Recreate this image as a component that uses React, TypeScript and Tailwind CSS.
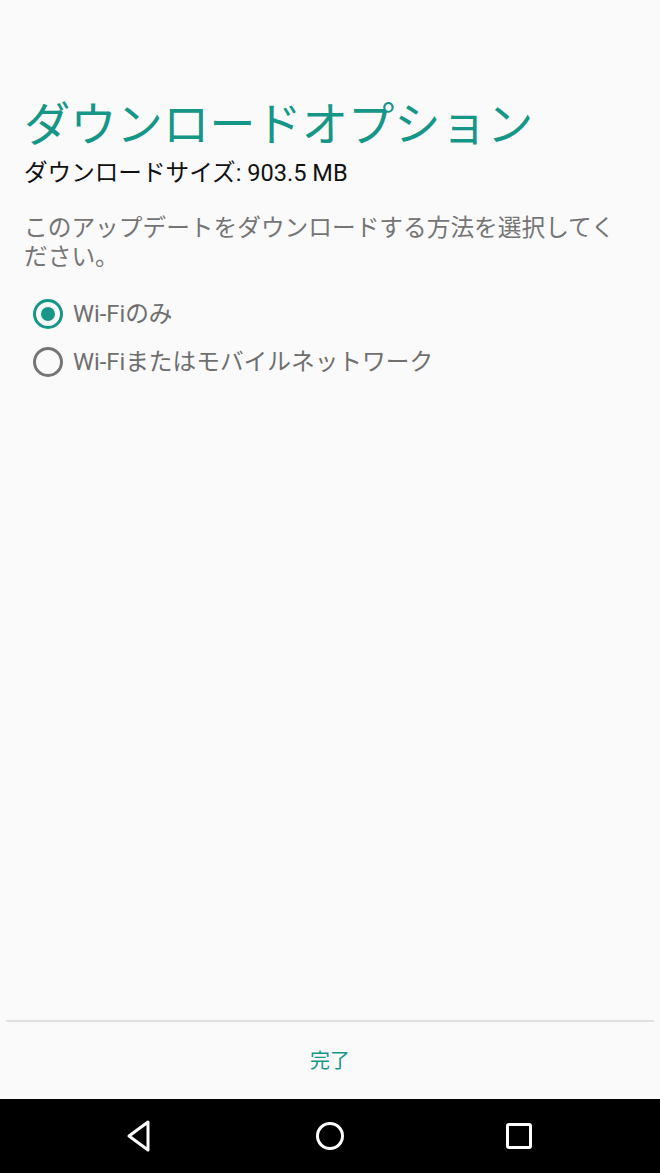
import React from 'react';

const FONT = { fontFamily: 'Roboto, "Noto Sans CJK JP", sans-serif' };

const Radio: React.FC<{ checked?: boolean; label: string }> = ({ checked, label }) => (
  <div className="flex h-[48px] items-center">
    <div className="flex w-[50px] shrink-0 items-center justify-center pl-[1px]">
      <span
        className={`flex h-[30px] w-[30px] items-center justify-center rounded-full border-[3px] ${
          checked ? 'border-[#159687]' : 'border-[#757575]'
        }`}
      >
        {checked && <span className="h-[14px] w-[14px] rounded-full bg-[#159687]" />}
      </span>
    </div>
    <span className="pl-[1px] text-[23.7px] leading-[28px] text-[#6f6f6f]">{label}</span>
  </div>
);

export default function App() {
  return (
    <div className="flex h-[1173px] w-[660px] flex-col bg-[#fafafa]" style={FONT}>
      <main className="flex-1 px-[24px] pt-[97px]">
        <h1 className="text-[46.3px] leading-[56px] text-[#159687]">ダウンロードオプション</h1>
        <p className="mt-[6px] text-[23.6px] leading-[28px] text-[#111]">
          ダウンロードサイズ: 903.5 MB
        </p>
        <p className="mt-[27px] pr-[10px] text-[23.7px] leading-[29px] text-[#757575]">
          このアップデートをダウンロードする方法を選択してください。
        </p>
        <div className="mt-[18px] -ml-[2px] flex flex-col">
          <Radio checked label="Wi-Fiのみ" />
          <Radio label="Wi-Fiまたはモバイルネットワーク" />
        </div>
      </main>

      <div className="mx-[6px] h-[2px] bg-[#e0e0e0]" />
      <div className="flex h-[77px] items-center justify-center">
        <span className="text-[20px] text-[#159687]">完了</span>
      </div>

      <nav className="flex h-[74px] items-center justify-around bg-black px-[46px]">
        <svg width="40" height="40" viewBox="0 0 40 40">
          <path d="M27 6 L8 20 L27 34 Z" fill="none" stroke="white" strokeWidth="3" strokeLinejoin="round" />
        </svg>
        <svg width="40" height="40" viewBox="0 0 40 40">
          <circle cx="20" cy="20" r="12.5" fill="none" stroke="white" strokeWidth="3" />
        </svg>
        <svg width="40" height="40" viewBox="0 0 40 40">
          <rect x="8.5" y="8.5" width="23" height="23" rx="1.5" fill="none" stroke="white" strokeWidth="3" />
        </svg>
      </nav>
    </div>
  );
}
